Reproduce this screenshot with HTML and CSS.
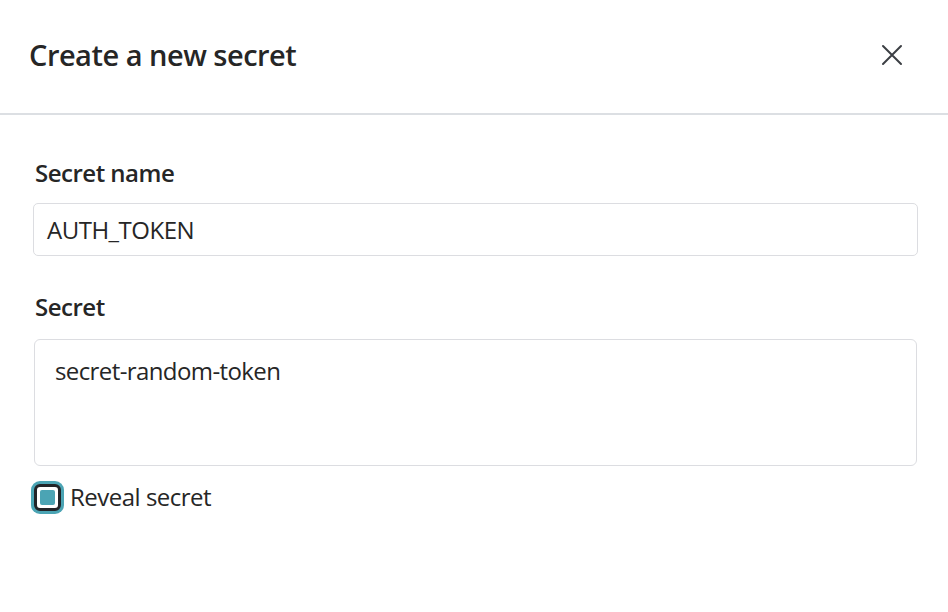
FILE: index.html
```html
<!DOCTYPE html>
<html lang="en">
<head>
<meta charset="utf-8">
<title>Create a new secret</title>
<link rel="stylesheet" href="styles.css">
</head>
<body>
<div class="dialog">
  <header class="dialog-header">
    <h1 class="dialog-title">Create a new secret</h1>
    <button class="close-btn" aria-label="Close">
      <svg width="22" height="22" viewBox="0 0 22 22"><path d="M2 2L20 20M20 2L2 20" stroke="#3c3f44" stroke-width="2" stroke-linecap="round"/></svg>
    </button>
  </header>
  <div class="dialog-body">
    <div class="field">
      <label class="field-label">Secret name</label>
      <div class="text-input">AUTH_TOKEN</div>
    </div>
    <div class="field field-secret">
      <label class="field-label">Secret</label>
      <div class="text-area">secret-random-token</div>
    </div>
    <label class="checkbox-row">
      <span class="checkbox"><span class="checkbox-fill"></span></span>
      <span class="checkbox-label">Reveal secret</span>
    </label>
  </div>
</div>
</body>
</html>
```

FILE: styles.css
```css
* { box-sizing: border-box; }
html, body {
  margin: 0;
  padding: 0;
  background: #ffffff;
}
body {
  font-family: "Open Sans", "Noto Sans", sans-serif;
  color: #262626;
  width: 948px;
  height: 612px;
  overflow: hidden;
}
.dialog-header {
  height: 115px;
  border-bottom: 2px solid #dcdfe3;
  display: flex;
  align-items: center;
  justify-content: space-between;
  padding: 0 45px 4px 29px;
}
.dialog-title {
  margin: 0;
  font-size: 29px;
  font-weight: 600;
  letter-spacing: -0.5px;
  line-height: 40px;
  color: #262626;
}
.close-btn {
  border: none;
  background: none;
  padding: 0;
  width: 22px;
  height: 22px;
  display: flex;
}
.dialog-body {
  padding: 42px 30px 0 33px;
  display: flex;
  flex-direction: column;
}
.field {
  display: flex;
  flex-direction: column;
}
.field-label {
  font-size: 24px;
  font-weight: 600;
  letter-spacing: -0.5px;
  line-height: 32px;
  padding-left: 2px;
  margin-bottom: 14px;
}
.text-input {
  height: 53px;
  border: 1px solid #dcdde1;
  border-radius: 5px;
  padding: 0 13px;
  font-size: 24px;
  letter-spacing: -0.5px;
  display: flex;
  align-items: center;
}
.field-secret {
  margin-top: 35px;
}
.field-secret .field-label {
  margin-bottom: 16px;
}
.text-area {
  height: 127px;
  margin: 0 1px;
  border: 1px solid #dcdde1;
  border-radius: 6px;
  padding: 14px 20px;
  font-size: 24px;
  letter-spacing: -0.6px;
  line-height: 34px;
}
.checkbox-row {
  display: flex;
  align-items: center;
  margin-top: 15px;
  padding-left: 1px;
  gap: 9px;
}
.checkbox {
  width: 27px;
  height: 27px;
  border: 3px solid #222428;
  border-radius: 6px;
  box-shadow: 0 0 0 3px #4ba4b4;
  display: flex;
  align-items: center;
  justify-content: center;
  background: #fff;
}
.checkbox-fill {
  width: 15px;
  height: 15px;
  border-radius: 2px;
  background: #4ba4b4;
}
.checkbox-label {
  font-size: 24px;
  letter-spacing: -0.5px;
  line-height: 32px;
}
```
